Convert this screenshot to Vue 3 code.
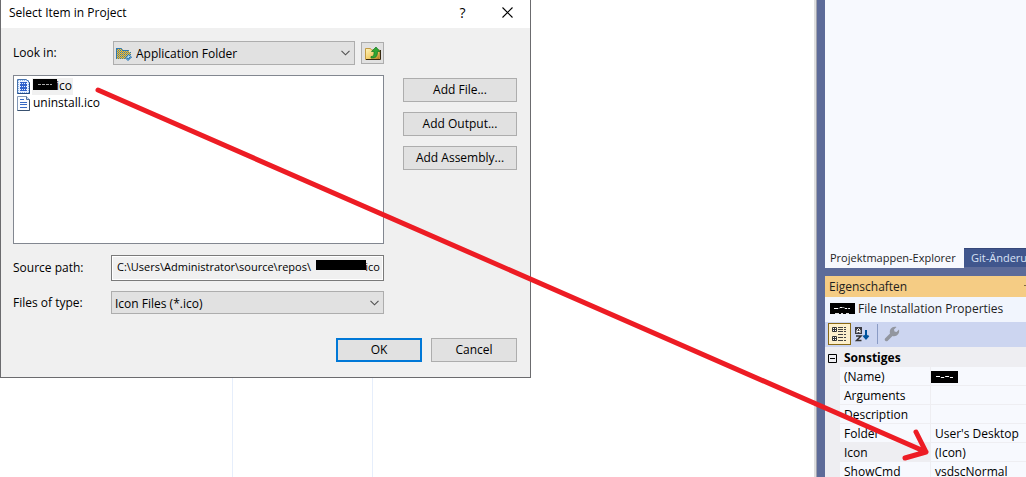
<script setup>
import { ref } from 'vue'

const folder = ref('Application Folder')
const fileType = ref('Icon Files (*.ico)')
const sourcePath = ref('C:\\Users\\Administrator\\source\\repos\\' + '\u00a0'.repeat(19) + 'ico')

const addButtons = ['Add File...', 'Add Output...', 'Add Assembly...']
const properties = [
  { name: '(Name)', value: '', masked: true },
  { name: 'Arguments', value: '' },
  { name: 'Description', value: '' },
  { name: 'Folder', value: "User's Desktop" },
  { name: 'Icon', value: '(Icon)', selected: true },
  { name: 'ShowCmd', value: 'vsdscNormal' },
]
const dots = [0, 2, 4, 6, 8, 10, 12]
</script>

<template>
  <div class="desktop">
    <main class="editor">
      <div class="guide first"></div>
      <div class="guide second"></div>

      <section class="dialog" role="dialog" aria-labelledby="dialog-title">
        <header class="titlebar">
          <h1 id="dialog-title">Select Item in Project</h1>
          <button class="caption help" aria-label="Help">?</button>
          <button class="caption" aria-label="Close">
            <svg width="11" height="11" viewBox="0 0 11 11"><path d="M.5 .5l10 10M10.5 .5l-10 10" stroke="#000" stroke-width="1.1" /></svg>
          </button>
        </header>

        <div class="body">
          <div class="look">
            <label for="look-in">Look in:</label>
            <div class="combo tall">
              <svg class="combo-icon" width="16" height="14" viewBox="0 0 16 14">
                <path d="M0 1h5l2 2h6v2h2l-2 7H1L0 11z" fill="#f2c23c" />
                <path d="M0 1.500h6M0 3.500h13M0 5.500h15M0 7.500h15M0 9.500h14M0 11.500h13" stroke="#2f78b0" stroke-dasharray="1 1" />
                <path d="M1 2.500h6M1 4.500h12M1 6.500h14M1 8.500h13M1 10.500h12" stroke="#8a8a5c" stroke-dasharray="1 1" />
                <path d="M.5 11V1.500h5l1 2h6.500" fill="none" stroke="#2f78b0" />
                <path d="M12.500 7.500l3 2.500-3.500 3.500L9.500 11z" fill="#a9d6f2" stroke="#1769ac" />
                <path d="M11 11l1.500 1 1.500-2" fill="none" stroke="#1769ac" />
              </svg>
              <select id="look-in" v-model="folder" class="with-icon"><option>Application Folder</option></select>
              <svg class="chevron" width="9" height="6" viewBox="0 0 9 6"><path d="M.5 .8l4 4 4-4" fill="none" stroke="#505050" stroke-width="1.1" /></svg>
            </div>
            <button class="up" aria-label="Up one level">
              <svg width="16" height="15" viewBox="0 0 16 15">
                <defs><linearGradient id="fold" x2="1" y2="1"><stop stop-color="#fff6bd" /><stop offset=".6" stop-color="#f2cb65" /><stop offset="1" stop-color="#a96d12" /></linearGradient></defs>
                <path d="M.5 13.500v-11h5l1 1.500h8v9.500z" fill="url(#fold)" stroke="#c29a43" />
                <path d="M1 13.500h14.500V4" fill="none" stroke="#38280f" />
                <path d="M6 10.500c3 0 3-2 3-5H6.500L11 1l4 4.500h-2.500c0 4-1 7-6.500 6.500z" fill="#2fa634" stroke="#16751f" stroke-width=".7" />
              </svg>
            </button>
          </div>

          <div class="middle">
            <ul class="files">
              <li>
                <svg width="13" height="15" viewBox="0 0 13 15">
                  <path d="M.5 .5h9l3 3v11H.5z" fill="#eaf2ff" stroke="#4773ad" />
                  <path v-for="d in dots" :key="d" :d="`M1 ${d + 1.5}h11`" stroke="#8db4ea" stroke-dasharray="1 1" />
                  <path d="M3 3h7v9H3z" fill="#2f62cc" />
                  <path d="M3 4.500h8M3 7.500h8M3 10.500h8" stroke="#e8f1ff" stroke-dasharray="1 1" />
                  <path d="M12.500 3.500v11H.5" fill="none" stroke="#234a86" />
                </svg>
                <span class="file active"><svg class="mask" width="24" height="11" viewBox="0 0 24 11"><path fill="#000" d="M0 0h24v11H0z" /><path d="M5 5.500h14" fill="none" stroke="#aaa" stroke-dasharray="3 1" /></svg><span class="ext">ico</span></span>
              </li>
              <li>
                <svg width="13" height="15" viewBox="0 0 13 15">
                  <path d="M.5 .5h9l3 3v11H.5z" fill="#fafcff" stroke="#8298b8" />
                  <path d="M12.500 3.500v11H.5" fill="none" stroke="#38516f" />
                  <path d="M9.500 .5v3h3" fill="#c9daf0" stroke="#52709c" />
                  <path d="M3 3.500h4M3 6.500h7M3 8.500h7M3 11.500h7" stroke="#3568c4" />
                </svg>
                <span class="file">uninstall.ico</span>
              </li>
            </ul>
            <div class="adders">
              <button v-for="b in addButtons" :key="b" class="push">{{ b }}</button>
            </div>
          </div>

          <div class="field source">
            <label for="source">Source path:</label>
            <div class="path">
              <input id="source" v-model="sourcePath" readonly />
              <span class="path-mask"></span>
            </div>
          </div>
          <div class="field type">
            <label for="type">Files of type:</label>
            <div class="combo">
              <select id="type" v-model="fileType"><option>Icon Files (*.ico)</option></select>
              <svg class="chevron" width="9" height="6" viewBox="0 0 9 6"><path d="M.5 .8l4 4 4-4" fill="none" stroke="#505050" stroke-width="1.1" /></svg>
            </div>
          </div>

          <footer class="actions">
            <button class="push primary">OK</button>
            <button class="push">Cancel</button>
          </footer>
        </div>
      </section>
    </main>

    <aside class="side">
      <div class="explorer"></div>
      <nav class="tabs">
        <button class="tab current">Projektmappen-Explorer</button>
        <button class="tab">Git-Änderungen</button>
      </nav>
      <section class="props">
        <h2><span>Eigenschaften</span><i class="drop"></i></h2>
        <div class="object">
          <svg width="25" height="11" viewBox="0 0 25 11"><path fill="#000" d="M0 0h25v11H0z" /><path d="M4 5.500h5l1-1h4l1 1h5" fill="none" stroke="#fff" stroke-dasharray="4 1" /><path d="M5 10.500h4M11 10.500h2M16 10.500h3" stroke="#ddd" /></svg>
          <span>File Installation Properties</span>
        </div>
        <div class="toolbar">
          <button class="tool on" aria-label="Categorized">
            <svg width="15" height="15" viewBox="0 0 15 15">
              <path d="M.5 .5h4v4h-4zM.5 9.500h4v4h-4z" fill="#fff" stroke="#333" />
              <path d="M1 2.500h3M2.500 1v3M1 11.500h3M2.500 10v3" stroke="#333" />
              <path d="M6 .5h5M12 .5h2M6 2.500h5M12 2.500h2M6 4.500h5M12 4.500h2M6 7.500h5M12 7.500h2M6 10.500h5M12 10.500h2M6 13.500h5M12 13.500h2" stroke="#444" />
            </svg>
          </button>
          <button class="tool" aria-label="Alphabetical">
            <svg width="15" height="15" viewBox="0 0 15 15">
              <path d="M0 0h7v7H0z" fill="#3b3b42" />
              <path d="M2 6V3l1.500-1.500L5 3v3M2 4.500h3" fill="none" stroke="#fff" />
              <path d="M1 9h5L1.500 13.500H6.500" fill="none" stroke="#333" stroke-width="1.500" />
              <path d="M11 3v8M8.500 8.500l2.500 3 2.500-3" fill="none" stroke="#00539c" stroke-width="2" />
            </svg>
          </button>
          <i class="divider"></i>
          <button class="tool" aria-label="Property pages" disabled>
            <svg width="16" height="16" viewBox="0 0 16 16"><path d="M1 12.500L6 7.500C5 3.500 8 0 12.500 1L10 3.500l.5 2 2 .5L15 3.500C16 8 12.500 11 8.500 10L3.500 15C1.500 16 0 14 1 12.500z" fill="#92969f" /></svg>
          </button>
        </div>
        <table>
          <colgroup>
            <col class="col-gutter" />
            <col class="col-name" />
            <col />
          </colgroup>
          <thead>
            <tr>
              <th class="gutter"><svg width="9" height="9" viewBox="0 0 9 9"><path d="M.5 .5h8v8h-8zM2 4.500h5" fill="none" stroke="#000" /></svg></th>
              <th colspan="2">Sonstiges</th>
            </tr>
          </thead>
          <tbody>
            <tr v-for="p in properties" :key="p.name" :class="{ selected: p.selected }">
              <td class="gutter"></td>
              <th scope="row">{{ p.name }}</th>
              <td class="value" :class="{ masked: p.masked }">
                <svg v-if="p.masked" width="27" height="12" viewBox="0 0 27 12"><path fill="#000" d="M0 0h27v12H0z" /><path d="M5 5.500h4l1 1h3l1-1h4l1 1h3" fill="none" stroke="#fff" stroke-dasharray="4 1" /></svg>
                {{ p.value }}
              </td>
            </tr>
          </tbody>
        </table>
      </section>
    </aside>

    <svg class="arrow" width="1026" height="477" viewBox="0 0 1026 477" aria-hidden="true">
      <path d="M98 90L926 452M916 432L926 452L905 458" fill="none" stroke="#ed1c24" stroke-width="5" stroke-linecap="round" stroke-linejoin="round" />
    </svg>
  </div>
</template>

<style>
body {
  margin: 0;
  overflow: hidden;
}
</style>

<style scoped>
* {
  box-sizing: border-box;
}
.desktop {
  position: relative;
  display: flex;
  height: 100vh;
  overflow: hidden;
  background: #fff;
  color: #000;
  font: 12px/16px "Open Sans", "Noto Sans", sans-serif;
}
button,
input,
select {
  margin: 0;
  padding: 0;
  border: 0;
  border-radius: 0;
  background: none;
  color: inherit;
  font: inherit;
  appearance: none;
}
svg {
  display: block;
  flex: none;
}
.editor {
  position: relative;
  flex: 1;
  display: flex;
  min-width: 0;
}
.guide {
  border-right: 1px solid #e6eefb;
}
.first {
  width: 233px;
}
.second {
  width: 140px;
}
.dialog {
  position: absolute;
  top: 0;
  left: 0;
  width: 531px;
  border: 1px solid #6b6b6e;
  border-top: 0;
  background: #f0f0f0;
}
.titlebar {
  display: flex;
  align-items: center;
  height: 28px;
  padding: 0 0 3px 8px;
  background: #fff;
}
h1 {
  flex: 1;
  margin: 0;
  font-size: 12px;
  font-weight: 400;
}
.caption {
  display: grid;
  place-items: center;
  width: 45px;
  height: 25px;
}
.help {
  font-size: 14px;
}
.body {
  padding: 13px 13px 15px 12px;
}
.look {
  display: flex;
  align-items: center;
  width: 371px;
}
.look label {
  width: 100px;
}
.combo {
  position: relative;
  flex: 1;
  height: 23px;
}
.tall {
  height: 24px;
}
.combo select {
  width: 100%;
  height: 100%;
  padding: 2px 20px 0 3px;
  border: 1px solid #adadad;
  background: #e1e1e1;
}
.combo .with-icon {
  padding-left: 22px;
}
.combo-icon {
  position: absolute;
  top: 6px;
  left: 3px;
}
.chevron {
  position: absolute;
  top: 9px;
  right: 5px;
}
.up {
  display: grid;
  place-items: center;
  width: 23px;
  height: 22px;
  margin-left: 6px;
  border: 1px solid #adadad;
  background: #e1e1e1;
}
.middle {
  display: flex;
  gap: 19px;
  margin-top: 10px;
}
.files {
  width: 371px;
  height: 169px;
  margin: 0;
  padding: 2px 3px;
  border: 1px solid #828790;
  background: #fff;
  list-style: none;
}
.files li {
  display: flex;
  align-items: center;
  gap: 2px;
  height: 17px;
}
.file {
  display: flex;
  height: 17px;
  padding: 0 1px;
}
.active {
  background: #f0f0f0;
}
.mask {
  margin-top: 1px;
}
.ext {
  margin-left: -1px;
}
.adders {
  display: flex;
  flex: 1;
  flex-direction: column;
  gap: 10px;
  padding-top: 3px;
}
.push {
  height: 24px;
  border: 1px solid #adadad;
  background: #e1e1e1;
}
.field {
  display: flex;
  align-items: center;
  width: 371px;
}
.field label {
  width: 98px;
}
.source {
  margin-top: 11px;
}
.type {
  margin-top: 10px;
}
.path {
  position: relative;
  flex: 1;
  height: 26px;
}
.path input {
  width: 100%;
  height: 100%;
  padding: 0 0 4px 5px;
  border: 1px solid #7a7a7a;
  outline: 1px solid #fff;
  outline-offset: -2px;
  font-size: 11px;
}
.path-mask {
  position: absolute;
  top: 5px;
  right: 18px;
  width: 50px;
  height: 10px;
  background: #000;
}
.actions {
  display: flex;
  justify-content: flex-end;
  gap: 9px;
  margin-top: 24px;
}
.actions .push {
  width: 86px;
}
.actions .primary {
  border: 2px solid #0078d7;
}
.side {
  display: flex;
  flex-direction: column;
  width: 212px;
  border-left: 2px solid #dedede;
  padding-left: 9px;
  background: linear-gradient(90deg, #a0a2ad 1px, #5d6b99 1px);
}
.explorer {
  height: 248px;
  flex: none;
  background: #f7f9fe;
}
.tabs {
  display: flex;
  flex: none;
  height: 20px;
  overflow: hidden;
}
.tab {
  flex: none;
  height: 19px;
  padding: 0 7px;
  border-top: 1px solid #36487a;
  background: #40568d;
  color: #d8e1f5;
  font-size: 11px;
  white-space: nowrap;
}
.current {
  width: 139px;
  height: 20px;
  padding: 0 0 0 5px;
  border: 0;
  background: #f7f9fe;
  color: #1e1e1e;
  text-align: left;
}
.props {
  flex: 1;
  margin-top: 8px;
  background: #eeeef2;
  color: #1e1e1e;
}
h2 {
  display: flex;
  align-items: center;
  justify-content: space-between;
  height: 21px;
  margin: 0;
  padding-left: 4px;
  background: #f5cc84;
  font-size: 12px;
  font-weight: 400;
}
.drop {
  width: 2px;
  height: 1px;
  margin-bottom: 3px;
  background: #806a43;
}
.object {
  display: flex;
  align-items: center;
  gap: 3px;
  height: 25px;
  padding: 0 0 2px 5px;
  background: #f1f5fd;
  white-space: nowrap;
}
.toolbar {
  display: flex;
  align-items: center;
  height: 25px;
  padding: 0 0 1px 3px;
  background: #ccd5f0;
}
.tool {
  display: grid;
  place-items: center;
  width: 23px;
  height: 22px;
}
.on {
  border: 1px solid #8a6914;
  background: #fdf0cc;
}
.divider {
  width: 1px;
  height: 20px;
  margin: 0 2px 0 3px;
  background: #8a9bc4;
}
table {
  width: 100%;
  table-layout: fixed;
  border-spacing: 0;
  color: #000;
  white-space: nowrap;
}
.col-gutter {
  width: 15px;
}
.col-name {
  width: 90px;
}
td,
th {
  height: 19px;
  padding: 1px 0 0 4px;
  overflow: hidden;
  text-align: left;
  font-weight: 400;
  line-height: 16px;
}
thead th {
  height: 20px;
  padding-top: 2px;
  font-weight: 700;
}
.gutter {
  padding-left: 3px;
}
tbody th,
.value {
  border-bottom: 1px solid #eeeef2;
  background: #f7f9fe;
}
.value {
  border-left: 1px solid #eeeef2;
}
.masked {
  padding-left: 0;
}
.selected th {
  background: #eeeef2;
}
.arrow {
  position: absolute;
  top: 0;
  left: 0;
  pointer-events: none;
}
</style>
